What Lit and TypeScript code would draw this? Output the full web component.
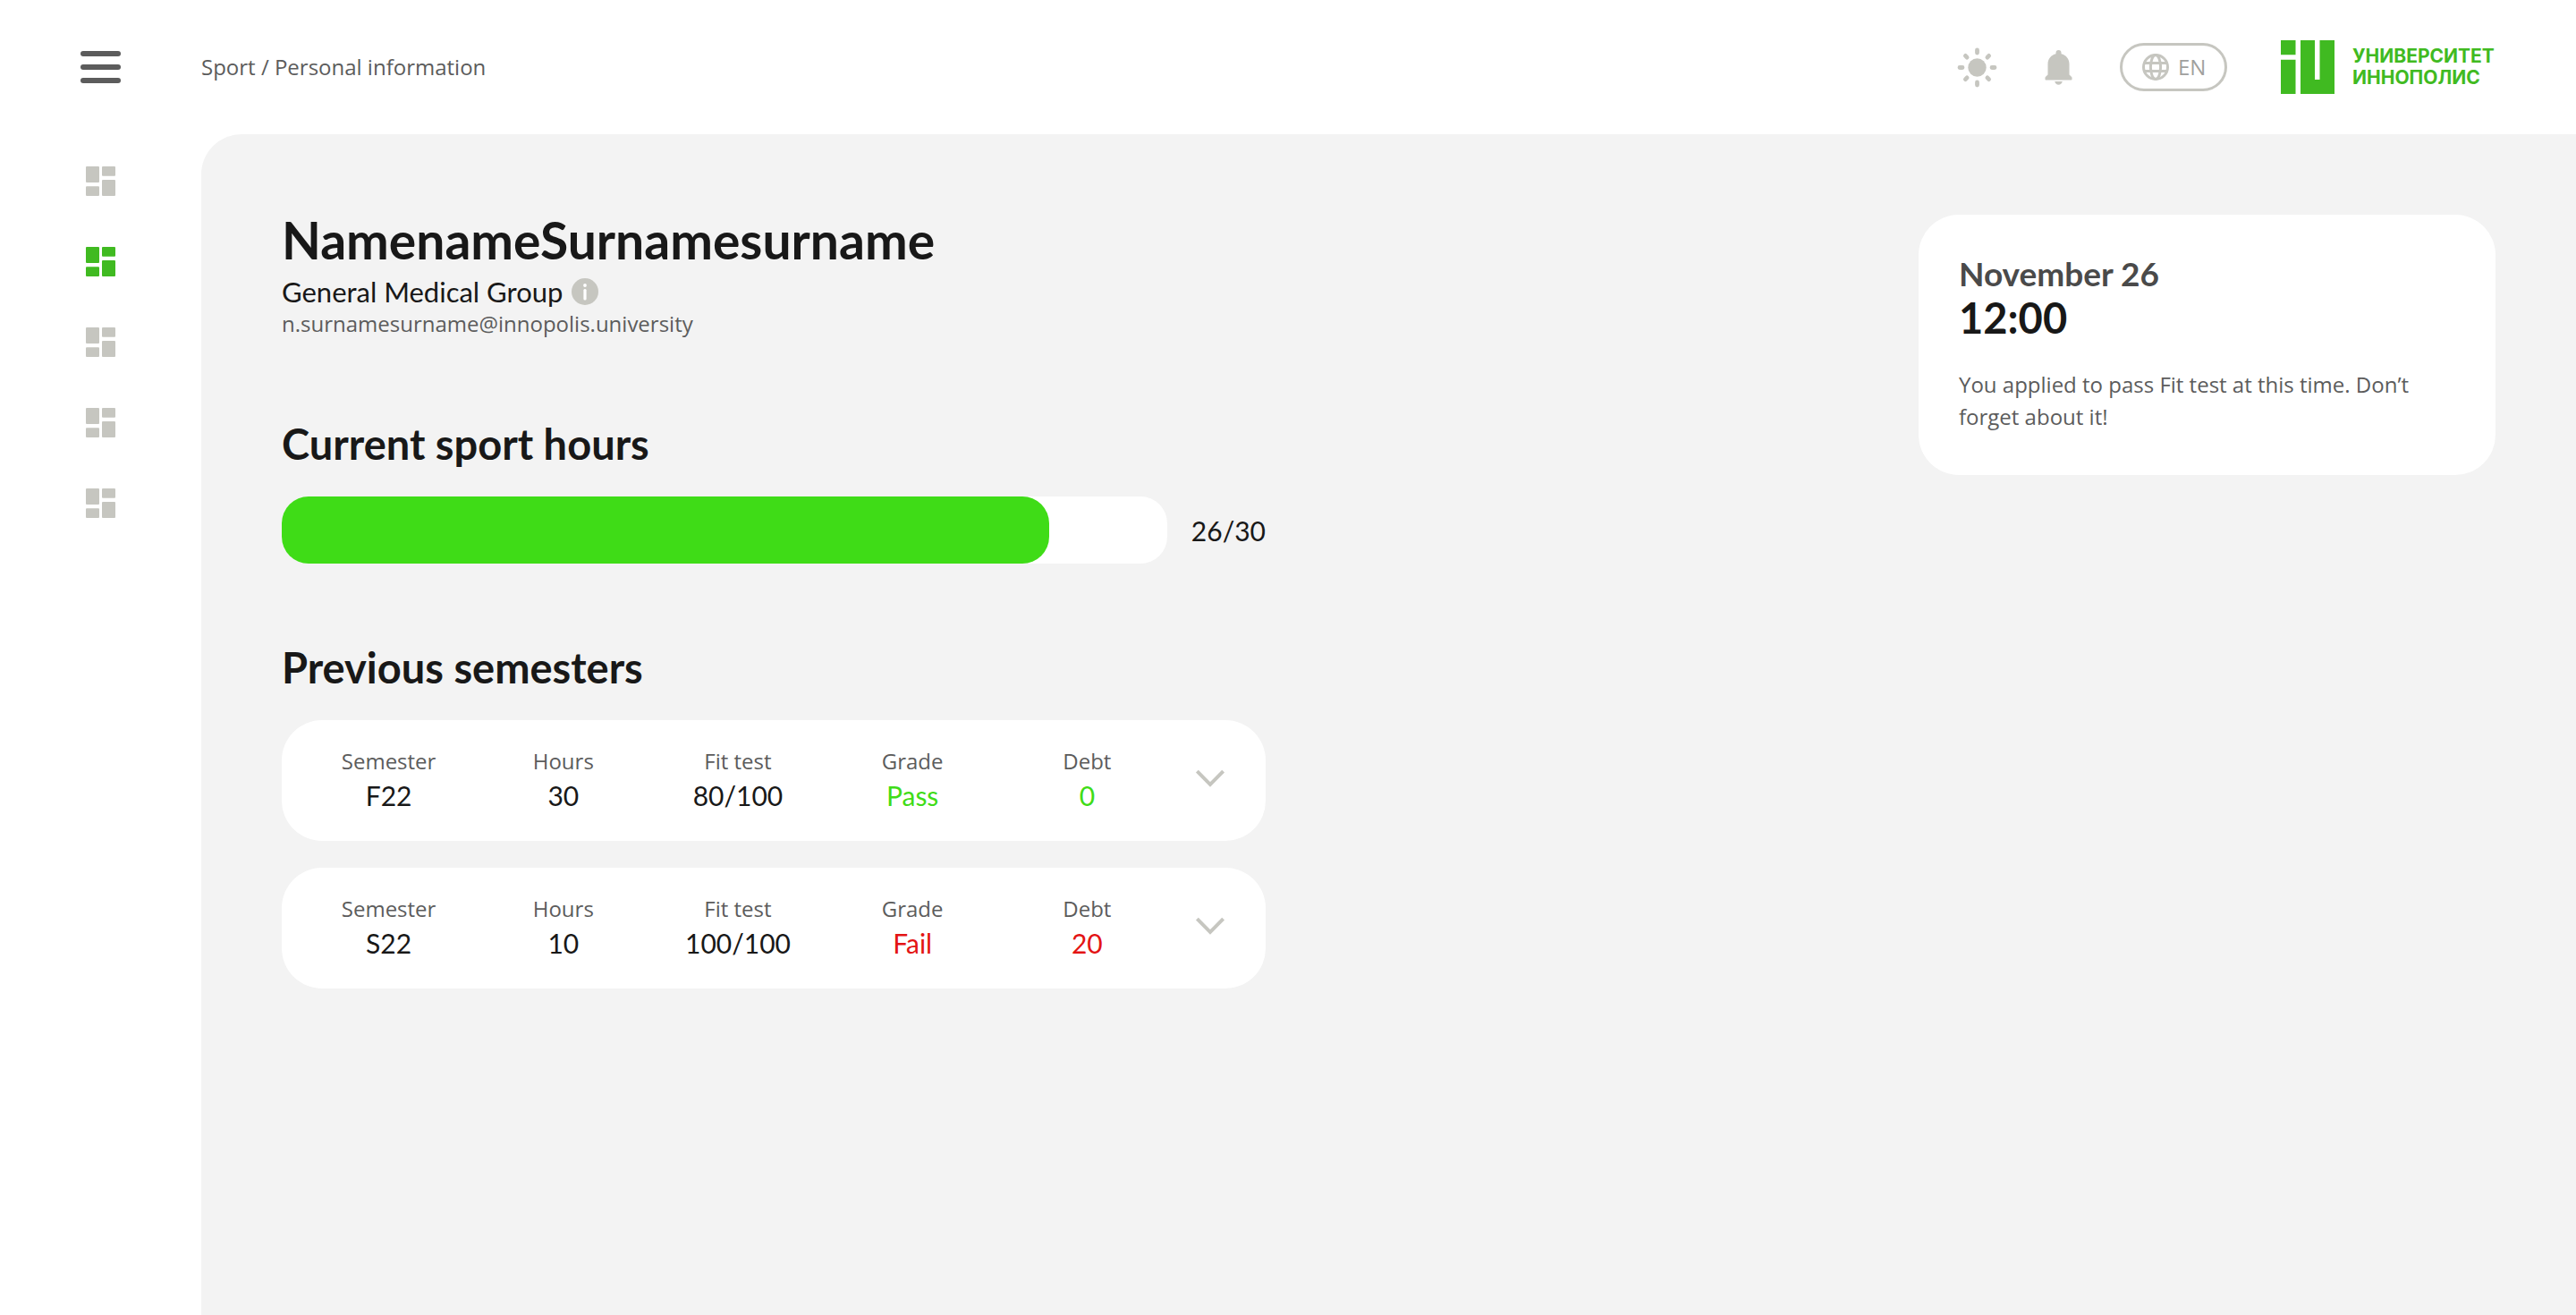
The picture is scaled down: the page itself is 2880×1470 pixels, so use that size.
import { LitElement, html, css } from "lit";
import { customElement, property, state } from "lit/decorators.js";
import { classMap } from "lit/directives/class-map.js";

interface Semester {
  name: string;
  hours: number;
  fitTest: string;
  grade: "Pass" | "Fail";
  debt: number;
}

@customElement("semester-card")
export class SemesterCard extends LitElement {
  @property({ attribute: false }) semester!: Semester;

  static styles = css`
    :host {
      display: flex;
      align-items: center;
      gap: 16px;
      padding: 26px 38px 31px 22px;
      border-radius: 45px;
      background: #fff;
    }
    table {
      flex: 1;
      width: 100%;
      table-layout: fixed;
      border-collapse: collapse;
      text-align: center;
    }
    th,
    td {
      padding: 0;
      line-height: 39px;
    }
    th {
      font: 400 24px/39px "Open Sans", "Noto Sans", sans-serif;
      color: #5c5c5c;
    }
    td {
      font-size: 30px;
      color: #181818;
    }
    .good {
      color: #3fdc17;
    }
    .bad {
      color: #e31414;
    }
    button {
      display: flex;
      flex-shrink: 0;
      justify-content: center;
      width: 48px;
      padding: 12px 0;
      border: 0;
      background: none;
      color: #c6c6c0;
      cursor: pointer;
    }
  `;

  render() {
    const s = this.semester;
    const tone = classMap({ good: s.grade === "Pass", bad: s.grade === "Fail" });
    return html`
      <table>
        <thead>
          <tr>
            <th scope="col">Semester</th>
            <th scope="col">Hours</th>
            <th scope="col">Fit test</th>
            <th scope="col">Grade</th>
            <th scope="col">Debt</th>
          </tr>
        </thead>
        <tbody>
          <tr>
            <td>${s.name}</td>
            <td>${s.hours}</td>
            <td>${s.fitTest}</td>
            <td class=${tone}>${s.grade}</td>
            <td class=${tone}>${s.debt}</td>
          </tr>
        </tbody>
      </table>
      <button type="button" aria-label="Show details">
        <svg width="34" height="20" viewBox="0 0 34 20" fill="none" stroke="currentColor" stroke-width="4">
          <path d="M2.4 2.2 17 16.8 31.6 2.2" />
        </svg>
      </button>
    `;
  }
}

@customElement("app-root")
export class AppRoot extends LitElement {
  @state() private activeItem = 1;

  private items = ["Dashboard", "Sport", "Schedule", "Clubs", "Settings"];
  private hours = 26;
  private hoursRequired = 30;
  private semesters: Semester[] = [
    { name: "F22", hours: 30, fitTest: "80/100", grade: "Pass", debt: 0 },
    { name: "S22", hours: 10, fitTest: "100/100", grade: "Fail", debt: 20 },
  ];

  static styles = css`
    :host {
      display: grid;
      grid-template-columns: 225px minmax(0, 1fr);
      grid-template-rows: 150px minmax(0, 1fr);
      min-height: 100vh;
      background: #fff;
      color: #181818;
      font-family: Lato, "Open Sans", sans-serif;
    }
    button {
      padding: 0;
      border: 0;
      background: none;
      color: #c6c6c0;
      font: inherit;
      cursor: pointer;
    }
    svg {
      display: block;
      fill: currentColor;
    }
    h1,
    h2,
    p {
      margin: 0;
    }
    .menu {
      place-self: center;
      color: #5c5c5c;
    }
    .header {
      display: flex;
      align-items: center;
      justify-content: space-between;
      padding-right: 90px;
    }
    .small {
      font: 400 24px/36px "Open Sans", "Noto Sans", sans-serif;
      color: #5c5c5c;
    }
    .actions {
      display: flex;
      align-items: center;
      gap: 46px;
    }
    .language {
      display: flex;
      align-items: center;
      gap: 10px;
      box-sizing: border-box;
      width: 120px;
      height: 54px;
      padding-left: 22px;
      border: 3px solid #c6c6c0;
      border-radius: 27px;
      font: 400 24px/36px "Open Sans", "Noto Sans", sans-serif;
    }
    .language span {
      color: #a0a09e;
    }
    .logo {
      display: flex;
      align-items: center;
      gap: 20px;
      margin-left: 14px;
      color: #40ba21;
      font: 700 21px/24px Inter, "Open Sans", sans-serif;
      text-decoration: none;
    }
    .logo span {
      width: 160px;
    }
    .nav {
      display: flex;
      flex-direction: column;
      padding-top: 8px;
    }
    .nav a {
      display: flex;
      align-items: center;
      justify-content: center;
      height: 90px;
      color: #c6c6c0;
    }
    .nav .active {
      color: #40ba21;
    }
    .main {
      display: grid;
      grid-template-columns: minmax(0, 1100px) minmax(0, 645px);
      align-items: start;
      justify-content: space-between;
      gap: 90px;
      padding: 90px;
      border-top-left-radius: 45px;
      background: #f3f3f3;
    }
    .column {
      display: flex;
      flex-direction: column;
      gap: 85px;
    }
    h1 {
      font-size: 57px;
      line-height: 56px;
    }
    h2 {
      font-size: 47px;
      line-height: 62px;
    }
    .group {
      display: flex;
      align-items: center;
      gap: 10px;
      margin-top: 12px;
      font-size: 31px;
      line-height: 36px;
    }
    .section {
      display: flex;
      flex-direction: column;
      gap: 30px;
    }
    h2 {
      margin-bottom: -2px;
    }
    .progress {
      display: flex;
      align-items: center;
    }
    .track {
      flex: 1;
      height: 75px;
      border-radius: 30px;
      background: #fff;
    }
    .fill {
      height: 100%;
      border-radius: 30px;
      background: #3fdc17;
    }
    .count {
      width: 110px;
      font-size: 30px;
      line-height: 36px;
      text-align: right;
    }
    .notice {
      padding: 43px 45px 47px;
      border-radius: 45px;
      background: #fff;
    }
    .date {
      color: #4a4a4a;
      font-size: 37px;
      font-weight: 700;
      line-height: 45px;
    }
    .time {
      margin-bottom: 30px;
      font-size: 47px;
      font-weight: 700;
      line-height: 54px;
    }
  `;

  private select(event: Event, index: number) {
    event.preventDefault();
    this.activeItem = index;
  }

  render() {
    const percent = (this.hours / this.hoursRequired) * 100;
    return html`
      <button class="menu" type="button" aria-label="Menu">
        <svg width="45" height="36" viewBox="0 0 45 36">
          <rect width="45" height="6" rx="3" />
          <rect y="15" width="45" height="6" rx="3" />
          <rect y="30" width="45" height="6" rx="3" />
        </svg>
      </button>

      <header class="header">
        <div class="small">Sport / Personal information</div>
        <div class="actions">
          <button type="button" aria-label="Theme">
            <svg width="45" height="45" viewBox="0 0 45 45">
              <circle cx="22.5" cy="22.5" r="10.2" />
              <path
                fill="none"
                stroke="currentColor"
                stroke-width="4.8"
                stroke-linecap="round"
                d="M22.5 3v3M22.5 39v3M3 22.500h3M39 22.500h3M9.400 9.400l1.700 1.700M33.900 33.900l1.700 1.700M35.600 9.400l-1.700 1.700M11.100 33.900l-1.700 1.700"
              />
            </svg>
          </button>
          <button type="button" aria-label="Notifications">
            <svg width="45" height="45" viewBox="0 0 45 45">
              <path
                d="M22.5 3a3 3 0 0 1 3 3v1.2c5.200 1.300 9 5.500 9 11.300v12l2.600 2.600c.3.3.4.6.4 1v1.400c0 .6-.4 1-1 1h-28c-.6 0-1-.4-1-1v-1.400c0-.4.1-.7.4-1l2.600-2.600v-12c0-5.800 3.800-10 9-11.300V6a3 3 0 0 1 3-3zM18.200 38h8.600c-.5 2.200-2.200 3.700-4.300 3.700s-3.800-1.500-4.300-3.700z"
              />
            </svg>
          </button>
          <button class="language" type="button" aria-label="Language: EN">
            <svg width="30" height="30" viewBox="0 0 30 30">
              <g fill="none" stroke="currentColor" stroke-width="3">
                <circle cx="15" cy="15" r="13.5" />
                <ellipse cx="15" cy="15" rx="5.6" ry="13.5" />
                <path d="M2.5 10.5h25M2.5 19.5h25" />
              </g>
            </svg>
            <span>EN</span>
          </button>
          <a class="logo" href="#">
            <svg width="60" height="60" viewBox="0 0 60 60">
              <path d="M0 0h16.5v16.3H0zM0 21.700h16.500V60H0zM22 0h16v44h5.500V0H60v60H22z" />
            </svg>
            <span>УНИВЕРСИТЕТ ИННОПОЛИС</span>
          </a>
        </div>
      </header>

      <nav class="nav">
        ${this.items.map(
          (item, index) => html`
            <a
              href="#"
              aria-label=${item}
              class=${classMap({ active: index === this.activeItem })}
              @click=${(event: Event) => this.select(event, index)}
            >
              <svg width="33" height="34" viewBox="0 0 33 34">
                <rect width="15" height="18" rx="1" />
                <rect x="18" width="15" height="10.7" rx="1" />
                <rect y="22.3" width="15" height="10.7" rx="1" />
                <rect x="18" y="15" width="15" height="18" rx="1" />
              </svg>
            </a>
          `,
        )}
      </nav>

      <main class="main">
        <div class="column">
          <div>
            <h1>NamenameSurnamesurname</h1>
            <div class="group">
              General Medical Group
              <button type="button" aria-label="About medical groups">
                <svg width="30" height="30" viewBox="0 0 30 30">
                  <circle cx="15" cy="15" r="15" />
                  <rect x="13.4" y="12" width="3.2" height="12.5" rx="1.5" fill="#fff" />
                  <circle cx="15" cy="8" r="1.9" fill="#fff" />
                </svg>
              </button>
            </div>
            <p class="small">n.surnamesurname@innopolis.university</p>
          </div>

          <section class="section">
            <h2>Current sport hours</h2>
            <div class="progress">
              <div
                class="track"
                role="progressbar"
                aria-label="Current sport hours"
                aria-valuenow=${this.hours}
                aria-valuemax=${this.hoursRequired}
              >
                <div class="fill" style="width: ${percent}%"></div>
              </div>
              <div class="count">${this.hours}/${this.hoursRequired}</div>
            </div>
          </section>

          <section class="section">
            <h2>Previous semesters</h2>
            ${this.semesters.map((s) => html`<semester-card .semester=${s}></semester-card>`)}
          </section>
        </div>

        <aside class="notice">
          <div class="date">November 26</div>
          <div class="time">12:00</div>
          <p class="small">You applied to pass Fit test at this time. Don’t forget about it!</p>
        </aside>
      </main>
    `;
  }
}
